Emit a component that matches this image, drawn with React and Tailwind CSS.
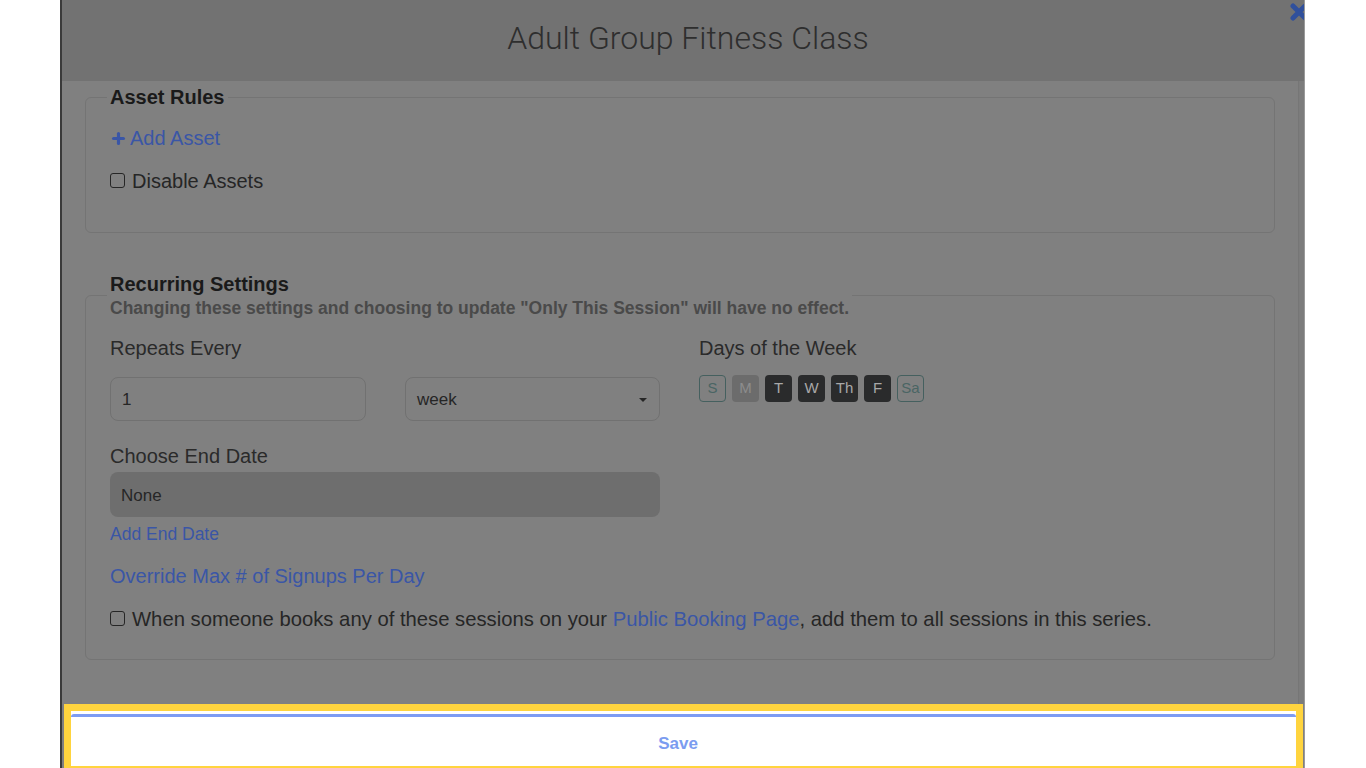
import { Plus } from 'lucide-react'

function Box() {
  return <span className="mt-[-2px] inline-block h-[15px] w-[15px] shrink-0 rounded-[3px] border border-[#262626]" />
}

const days = [
  { label: 'S', cls: 'border border-[#45605f] text-[#4a6564]' },
  { label: 'M', cls: 'bg-[#6c6c6c] text-[#8c8c8c]' },
  { label: 'T', cls: 'bg-[#2a2b2c] text-[#a8a8a8]' },
  { label: 'W', cls: 'bg-[#2a2b2c] text-[#a8a8a8]' },
  { label: 'Th', cls: 'bg-[#2a2b2c] text-[#a8a8a8]' },
  { label: 'F', cls: 'bg-[#2a2b2c] text-[#a8a8a8]' },
  { label: 'Sa', cls: 'border border-[#45605f] text-[#4a6564]' },
]

export default function App() {
  return (
    <main className="h-[768px] overflow-hidden bg-white font-['Liberation_Sans',Arial,sans-serif]">
      <div className="ml-[60px] flex h-[768px] w-[1245px] flex-col overflow-hidden border-l-2 border-r border-l-[#3a3a3a] border-r-[#9a9a9a] bg-[#808080]">
        {/* header */}
        <header className="relative flex h-[81px] shrink-0 items-center justify-center bg-[#727272] pl-[10px]">
          <h1 className="pb-[5px] font-['Roboto',sans-serif] text-[32px] font-light text-[#2e2e2e]">Adult Group Fitness Class</h1>
          <svg className="absolute left-[1227px] top-[2px] h-[20px] w-[20px]" viewBox="0 0 20 20">
            <path d="M4 4 L16 16 M16 4 L4 16" stroke="#30509c" strokeWidth="5" strokeLinecap="round" />
          </svg>
        </header>

        {/* body */}
        <div className="flex min-h-0 flex-1">
          <div className="flex-1 px-[23px]">
            <fieldset className="mt-[4px] rounded-[6px] border border-[#747474] px-[24px] pb-[39px]">
              <legend className="-ml-[3px] px-[3px] text-[20px] font-bold leading-[24px] text-[#1a1a1a]">Asset Rules</legend>
              <div className="mt-[17px] flex items-center text-[20px] leading-[24px] text-[#3a56a6]">
                <Plus className="mr-[3px] h-[17px] w-[17px]" strokeWidth={4.5} />
                Add Asset
              </div>
              <label className="mt-[19px] flex items-center gap-[7px] text-[20px] leading-[24px] text-[#262626]">
                <Box />
                Disable Assets
              </label>
            </fieldset>

            <fieldset className="mt-[39px] rounded-[6px] border border-[#747474] px-[24px] pb-[28px]">
              <legend className="-ml-[3px] px-[3px]">
                <div className="text-[20px] font-bold leading-[24px] text-[#1a1a1a]">Recurring Settings</div>
                <div className="mt-[1px] text-[17.5px] font-bold leading-[22px] text-[#4a4a4a]">
                  Changing these settings and choosing to update "Only This Session" will have no effect.
                </div>
              </legend>

              <div className="flex">
                <div className="w-[550px]">
                  <div className="mt-[17px] text-[20px] leading-[24px] text-[#2a2a2a]">Repeats Every</div>
                  <div className="mt-[17px] flex gap-[39px]">
                    <div className="flex h-[44px] w-[256px] items-center rounded-[8px] border border-[#717171] px-[11px] pt-[2px] text-[17px] text-[#262626]">1</div>
                    <div className="flex h-[44px] w-[255px] items-center justify-between rounded-[8px] border border-[#717171] pl-[11px] pr-[12px] pt-[2px] text-[17px] text-[#262626]">
                      week
                      <span className="h-0 w-0 border-x-[4px] border-t-[4px] border-x-transparent border-t-[#262626]" />
                    </div>
                  </div>
                  <div className="mt-[23px] text-[20px] leading-[24px] text-[#2a2a2a]">Choose End Date</div>
                  <div className="mt-[4px] flex h-[45px] items-center rounded-[8px] bg-[#6e6e6e] px-[11px] pt-[2px] text-[17px] text-[#262626]">None</div>
                  <div className="mt-[6px] text-[17.5px] leading-[22px] text-[#3a56a6]">Add End Date</div>
                </div>
                <div className="ml-[39px]">
                  <div className="mt-[17px] text-[20px] leading-[24px] text-[#2a2a2a]">Days of the Week</div>
                  <div className="mt-[15px] flex gap-[6px]">
                    {days.map((d) => (
                      <span key={d.label} className={`flex h-[27px] w-[27px] items-center justify-center rounded-[4px] text-[15px] font-medium ${d.cls}`}>
                        {d.label}
                      </span>
                    ))}
                  </div>
                </div>
              </div>

              <div className="mt-[19px] text-[20px] leading-[24px] text-[#3a56a6]">Override Max # of Signups Per Day</div>
              <label className="mt-[19px] flex items-center gap-[7px] text-[20.25px] leading-[24px] text-[#262626]">
                <Box />
                <span>
                  When someone books any of these sessions on your <span className="text-[#3a56a6]">Public Booking Page</span>, add them to all sessions in this series.
                </span>
              </label>
            </fieldset>
          </div>
          <div className="w-[6px] border-l border-[#767676] bg-[#7c7c7c]" />
        </div>

        {/* footer */}
        <div className="ml-[2px] mr-[1px] h-[64px] shrink-0 border-x-[7px] border-b-[2px] border-t-[7px] border-[#ffd43e] bg-white pt-[3px]">
          <button className="flex h-full w-full items-start justify-center rounded-t-[3px] border-t-[3px] border-[#7d9cf3] pr-[11px] pt-[14px] text-[17px] font-semibold text-[#7b9cf0]">
            Save
          </button>
        </div>
      </div>
    </main>
  )
}
